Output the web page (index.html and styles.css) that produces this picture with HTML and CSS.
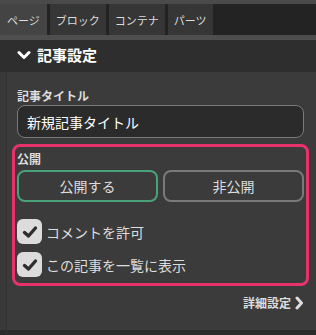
FILE: index.html
```html
<!DOCTYPE html>
<html lang="ja">
<head>
  <meta charset="UTF-8">
  <title>記事設定</title>
  <link rel="stylesheet" href="styles.css">
</head>
<body>
  <div class="topline"></div>
  <nav class="tabs">
    <span class="tab active">ページ</span>
    <span class="tab">ブロック</span>
    <span class="tab">コンテナ</span>
    <span class="tab">パーツ</span>
  </nav>
  <div class="sep"></div>

  <div class="head">
    <svg width="14" height="12" viewBox="0 0 14 12"><path d="M2 3.5 L7 8.5 L12 3.5" fill="none" stroke="#fff" stroke-width="3" stroke-linecap="round" stroke-linejoin="round"/></svg>
    <span>記事設定</span>
  </div>

  <div class="panel">
    <div class="inner">
      <label class="lbl">記事タイトル</label>
      <div class="field">新規記事タイトル</div>

      <div class="pub">
        <div class="lbl">公開</div>
        <div class="btns">
          <button class="btn on">公開する</button>
          <button class="btn">非公開</button>
        </div>
        <div class="check">
          <span class="box"><svg width="16" height="14" viewBox="0 0 16 14"><path d="M2.5 7.5 L6.5 11 L13.5 3" fill="none" stroke="#2e2e2e" stroke-width="3.4" stroke-linecap="round" stroke-linejoin="round"/></svg></span>
          <span>コメントを許可</span>
        </div>
        <div class="check">
          <span class="box"><svg width="16" height="14" viewBox="0 0 16 14"><path d="M2.5 7.5 L6.5 11 L13.5 3" fill="none" stroke="#2e2e2e" stroke-width="3.4" stroke-linecap="round" stroke-linejoin="round"/></svg></span>
          <span>この記事を一覧に表示</span>
        </div>
      </div>

      <div class="more">
        <span>詳細設定</span>
        <svg width="10" height="14" viewBox="0 0 10 14"><path d="M3 2 L7.5 7 L3 12" fill="none" stroke="#ddd" stroke-width="3" stroke-linecap="round" stroke-linejoin="round"/></svg>
      </div>
    </div>
  </div>
</body>
</html>
```

FILE: styles.css
```css
body {
  margin: 0;
  width: 316px;
  height: 335px;
  overflow: hidden;
  background-color: #2a2a2a;
  font-family: "Noto Sans CJK JP", "Noto Sans", sans-serif;
  color: #ddd;
}
.topline {
  height: 4px;
  background-color: #4a4a4a;
}
.tabs {
  display: flex;
  gap: 3px;
  height: 31px;
  background-color: #232323;
}
.tab {
  display: flex;
  align-items: center;
  padding: 0 6px;
  font-size: 11px;
  color: #ddd;
  background-color: #363636;
}
.tab.active {
  padding: 0 7px;
  background-color: #444;
}
.sep {
  height: 5px;
  background-color: #4e4e4e;
}
.head {
  display: flex;
  align-items: center;
  gap: 6px;
  height: 32px;
  box-sizing: border-box;
  padding: 0 0 3px 17px;
  background-color: #2e2e2e;
  color: #fff;
  font-size: 15px;
  font-weight: bold;
}
.panel {
  background-color: #3b3b3b;
  border-left: 6px solid #393939;
  height: 258px;
}
.inner {
  border-left: 1px solid #333;
  height: 100%;
  padding: 15px 12px 0 10px;
}
.lbl {
  display: block;
  font-size: 12px;
  font-weight: bold;
  color: #ddd;
  margin-bottom: 1px;
}
.field {
  height: 33px;
  box-sizing: border-box;
  border: 1px solid #7a7a7a;
  border-radius: 8px;
  background-color: #2b2b2b;
  padding: 0 9px;
  display: flex;
  align-items: center;
  font-size: 14px;
  color: #fff;
}
.pub {
  margin: 6px -5px 0 -5px;
  border: 3px solid #e8326b;
  border-radius: 8px;
  padding: 3px 2px 6px 2px;
}
.pub .lbl {
  margin-bottom: 3px;
}
.btns {
  display: grid;
  grid-template-columns: 1fr 1fr;
  gap: 5px;
  margin-bottom: 17px;
}
.btn {
  height: 32px;
  border: 2px solid #7a7a7a;
  border-radius: 8px;
  background-color: #3b3b3b;
  color: #ddd;
  font-family: inherit;
  font-size: 14px;
}
.btn.on {
  border-color: #4aa27a;
}
.check {
  display: flex;
  align-items: center;
  gap: 4px;
  height: 25px;
  font-size: 14px;
  color: #ddd;
}
.check + .check {
  margin-top: 8px;
}
.box {
  width: 25px;
  height: 25px;
  border-radius: 6px;
  background-color: #dcdcdc;
  display: flex;
  align-items: center;
  justify-content: center;
}
.more {
  display: flex;
  justify-content: flex-end;
  align-items: center;
  gap: 3px;
  margin-top: 8px;
  font-size: 12px;
  font-weight: bold;
  color: #ddd;
}
```
